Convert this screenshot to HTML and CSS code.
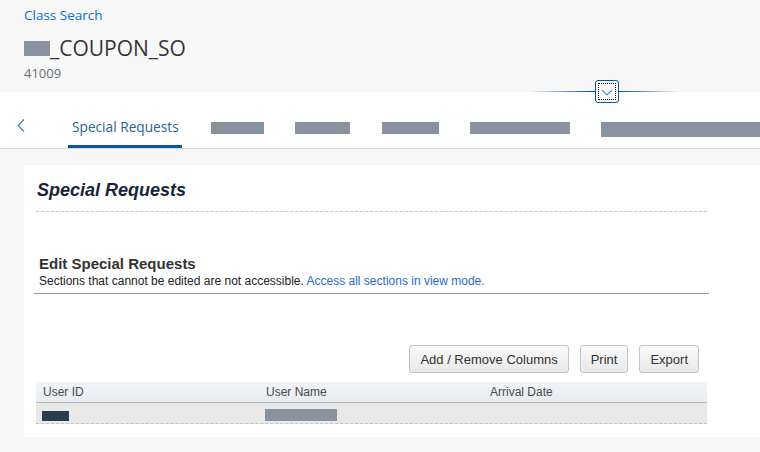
FILE: index.html
```html
<!DOCTYPE html>
<html>
<head>
<meta charset="utf-8">
<link rel="stylesheet" href="styles.css">
</head>
<body>
<header class="obj-header">
  <a class="crumb" href="#">Class Search</a>
  <div class="obj-title"><span class="redact title-redact"></span>_COUPON_SO</div>
  <div class="obj-sub">41009</div>
  <div class="collapse">
    <span class="collapse-line"></span>
    <button class="collapse-btn" type="button">
      <svg width="12" height="7" viewBox="0 0 12 7"><path d="M1 1 L6 6 L11 1" fill="none" stroke="#5b8bc4" stroke-width="1.2"/></svg>
    </button>
  </div>
</header>
<nav class="tabs">
  <span class="tab-back">
    <svg width="8" height="13" viewBox="0 0 8 13"><path d="M7 0.5 L1.2 6.5 L7 12.5" fill="none" stroke="#4f7fb8" stroke-width="1.3"/></svg>
  </span>
  <span class="tab active">Special Requests</span>
  <span class="tab-redact r1"></span>
  <span class="tab-redact r2"></span>
  <span class="tab-redact r3"></span>
  <span class="tab-redact r4"></span>
  <span class="tab-redact r5"></span>
</nav>
<main class="content">
  <section class="card">
    <h2 class="card-title">Special Requests</h2>
    <div class="dash-line"></div>
    <h3 class="edit-title">Edit Special Requests</h3>
    <p class="edit-note">Sections that cannot be edited are not accessible. <a href="#">Access all sections in view mode.</a></p>
    <div class="solid-line"></div>
    <div class="toolbar">
      <button class="btn" type="button">Add / Remove Columns</button>
      <button class="btn" type="button">Print</button>
      <button class="btn" type="button">Export</button>
    </div>
    <div class="grid">
      <div class="grid-head">
        <span class="col c1">User ID</span>
        <span class="col c2">User Name</span>
        <span class="col c3">Arrival Date</span>
      </div>
      <div class="grid-row">
        <span class="col c1"><span class="cell-redact dark"></span></span>
        <span class="col c2"><span class="cell-redact light"></span></span>
        <span class="col c3"></span>
      </div>
    </div>
  </section>
</main>
</body>
</html>
```
FILE: styles.css
```css
html, body {
  margin: 0;
  padding: 0;
}
body {
  background: #f7f7f7;
  font-family: "Open Sans", "Liberation Sans", sans-serif;
  width: 760px;
  height: 452px;
  overflow: hidden;
  position: relative;
}
.obj-header {
  height: 92px;
  box-sizing: border-box;
  padding: 6px 24px 0 24px;
  position: relative;
}
.crumb {
  display: block;
  font-size: 13.5px;
  line-height: 18px;
  color: #0a6ed1;
  text-decoration: none;
}
.obj-title {
  margin-top: 11px;
  display: flex;
  align-items: center;
  font-size: 21px;
  line-height: 26px;
  color: #32363a;
}
.redact {
  display: inline-block;
  background: #89939f;
}
.title-redact {
  width: 26px;
  height: 15px;
}
.obj-sub {
  margin-top: 3px;
  font-size: 13px;
  line-height: 18px;
  color: #6a6d70;
}
.collapse {
  position: absolute;
  left: 530px;
  top: 79px;
  width: 150px;
  height: 24px;
  display: flex;
  justify-content: center;
  align-items: center;
  z-index: 2;
}
.collapse-line {
  position: absolute;
  left: 0;
  right: 0;
  top: 12px;
  height: 1px;
  background: linear-gradient(to right, rgba(8,84,160,0) 0%, #0854a0 40%, #0854a0 60%, rgba(8,84,160,0) 100%);
}
.collapse-btn {
  position: relative;
  width: 24px;
  height: 23px;
  padding: 0;
  margin-left: 3px;
  border: 1px solid #0854a0;
  border-radius: 3px;
  background: #fff;
  outline: 1px dotted #000;
  outline-offset: -4px;
  display: flex;
  align-items: center;
  justify-content: center;
}
.collapse-btn svg {
  margin-top: 2px;
}
.tabs {
  height: 56px;
  background: #fff;
  border-bottom: 1px solid #d9d9d9;
  display: flex;
  align-items: stretch;
  overflow: hidden;
  white-space: nowrap;
}
.tabs > * {
  flex: none;
}
.tab-back {
  width: 68px;
  box-sizing: border-box;
  padding-left: 17px;
  display: flex;
  align-items: center;
  padding-top: 22px;
  padding-bottom: 12px;
}
.tab {
  box-sizing: border-box;
  font-size: 13.7px;
  color: #346187;
  display: flex;
  align-items: center;
  padding: 16px 3px 0 4px;
  border-bottom: 3px solid transparent;
}
.tab.active {
  border-bottom-color: #0854a0;
  color: #2e6194;
}
.tab-redact {
  align-self: flex-start;
  margin-top: 30px;
  height: 12px;
  background: #89939f;
}
.r1 { width: 53px; margin-left: 29px; }
.r2 { width: 55px; margin-left: 31px; }
.r3 { width: 57px; margin-left: 32px; }
.r4 { width: 100px; margin-left: 31px; }
.r5 { width: 180px; margin-left: 31px; height: 15px; }
.content {
  padding: 16px 0 0 24px;
}
.card {
  background: #fff;
  height: 272px;
  box-sizing: border-box;
  padding: 13px 53px 0 12px;
  font-family: "Liberation Sans", Arial, sans-serif;
}
.card-title {
  margin: 0;
  font-size: 18px;
  line-height: 24px;
  font-style: italic;
  font-weight: bold;
  color: #17253a;
  padding-left: 1px;
}
.dash-line {
  margin-top: 9px;
  border-top: 1px dashed #c8c8c8;
}
.edit-title {
  margin: 43px 0 0 3px;
  font-size: 15px;
  line-height: 18px;
  font-weight: bold;
  color: #333;
}
.edit-note {
  margin: 1px 0 0 3px;
  font-size: 12px;
  line-height: 14px;
  color: #222;
}
.edit-note a {
  color: #2a6ac9;
  text-decoration: none;
}
.solid-line {
  margin-top: 5px;
  margin-left: -2px;
  margin-right: -2px;
  border-top: 1px solid #999;
}
.toolbar {
  margin-top: 51px;
  display: flex;
  justify-content: flex-end;
  gap: 11px;
  padding-right: 8px;
}
.btn {
  height: 28px;
  box-sizing: border-box;
  padding: 0 10px;
  font-family: "Liberation Sans", Arial, sans-serif;
  font-size: 13px;
  color: #333;
  border: 1px solid #c2c2c2;
  border-radius: 3px;
  background: linear-gradient(#f9f9f9, #e9e9e9);
}
.grid {
  margin-top: 9px;
}
.grid-head {
  display: flex;
  height: 21px;
  box-sizing: border-box;
  background: linear-gradient(#f2f4f7, #e8ecf1);
  border-bottom: 1px solid #b4b8bd;
  align-items: center;
  font-size: 12px;
  color: #4a4a4a;
}
.grid-row {
  display: flex;
  height: 21px;
  box-sizing: border-box;
  background: #e8e8e8;
  border-bottom: 1px dashed #b8c6d8;
  align-items: flex-end;
  padding-bottom: 2px;
}
.col {
  flex: none;
  display: flex;
}
.c1 { width: 223px; padding-left: 7px; box-sizing: border-box; }
.c2 { width: 224px; padding-left: 7px; box-sizing: border-box; }
.c3 { flex: 1; padding-left: 7px; box-sizing: border-box; }
.cell-redact {
  display: inline-block;
}
.cell-redact.dark {
  width: 27px;
  height: 10px;
  background: #2c3b4d;
  margin-left: -1px;
}
.cell-redact.light {
  width: 72px;
  height: 12px;
  background: #89939f;
  margin-left: -1px;
}
```
